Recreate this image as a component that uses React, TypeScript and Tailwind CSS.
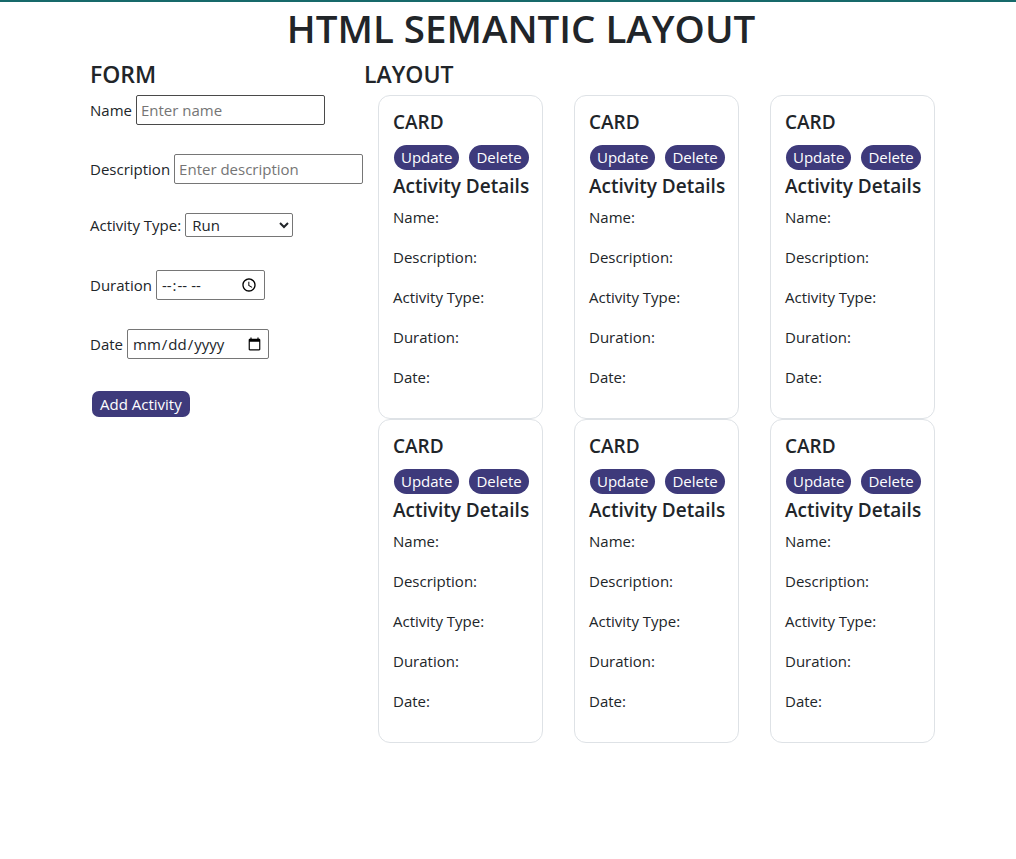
const cards = [1, 2, 3, 4, 5, 6];
const fields = ["Name:", "Description:", "Activity Type:", "Duration:", "Date:"];

function ActivityCard() {
  return (
    <article className="h-[324px] rounded-[12px] border border-[#dee2e6] px-[14px] pt-[14px]">
      <h4 className="mb-[11px] text-[19px] leading-[24px] font-semibold">CARD</h4>
      <div className="flex gap-[10px] pl-px">
        <button className="h-[25px] rounded-full bg-[#3e3a7b] px-[7px] text-[15px] leading-[25px] text-white">
          Update
        </button>
        <button className="h-[25px] rounded-full bg-[#3e3a7b] px-[7px] text-[15px] leading-[25px] text-white">
          Delete
        </button>
      </div>
      <h5 className="mt-[4px] mb-[7px] text-[19px] leading-[24px] font-semibold whitespace-nowrap">
        Activity Details
      </h5>
      {fields.map((f) => (
        <p key={f} className="mb-4 text-[15px] leading-[24px]">
          {f}
        </p>
      ))}
    </article>
  );
}

export default function App() {
  return (
    <div
      className="min-h-screen border-t-2 border-[#17696a] bg-white text-[#212529]"
      style={{ fontFamily: "'Open Sans', sans-serif" }}
    >
      <h1 className="pt-[2px] pl-[26px] text-center text-[38.5px] leading-[48px] font-semibold">
        HTML SEMANTIC LAYOUT
      </h1>
      <main className="flex pt-[8px] pl-[90px]">
        <section className="w-[274px]">
          <h2 className="mb-[7px] text-[23px] leading-[28px] font-semibold">FORM</h2>
          <form className="flex flex-col text-[15px]">
            <div className="flex h-[30px] items-center gap-1">
              <label>Name</label>
              <input
                className="h-[30px] w-[189px] rounded-[2px] border border-[#4a4a4a] px-1 placeholder:text-[#757575]"
                placeholder="Enter name"
              />
            </div>
            <div className="mt-[29px] flex h-[30px] items-center gap-1">
              <label>Description</label>
              <input
                className="h-[30px] w-[189px] rounded-[2px] border border-[#767676] px-1 placeholder:text-[#757575]"
                placeholder="Enter description"
              />
            </div>
            <div className="mt-[29px] flex h-[24px] items-center gap-1">
              <label>Activity Type:</label>
              <select className="h-[24px] w-[108px] rounded-[2px] border border-[#767676] pl-[2px] text-[15px]">
                <option>Run</option>
                <option>Walk</option>
                <option>Swim</option>
              </select>
            </div>
            <div className="mt-[33px] flex h-[30px] items-center gap-1">
              <label>Duration</label>
              <input
                type="time"
                className="h-[30px] w-[109px] rounded-[2px] border border-[#767676] px-1"
              />
            </div>
            <div className="mt-[29px] flex h-[30px] items-center gap-1">
              <label>Date</label>
              <input
                type="date"
                className="h-[30px] w-[142px] rounded-[2px] border border-[#767676] px-1"
              />
            </div>
            <div className="mt-[32px] pl-[2px]">
              <button
                type="button"
                className="h-[26px] rounded-[7px] bg-[#3e3a7b] px-[8px] text-[15px] leading-[26px] text-white"
              >
                Add Activity
              </button>
            </div>
          </form>
        </section>
        <section>
          <h2 className="mb-[7px] text-[23px] leading-[28px] font-semibold">LAYOUT</h2>
          <div className="ml-[14px] grid grid-cols-[165px_165px_165px] gap-x-[31px]">
            {cards.map((c) => (
              <ActivityCard key={c} />
            ))}
          </div>
        </section>
      </main>
    </div>
  );
}
